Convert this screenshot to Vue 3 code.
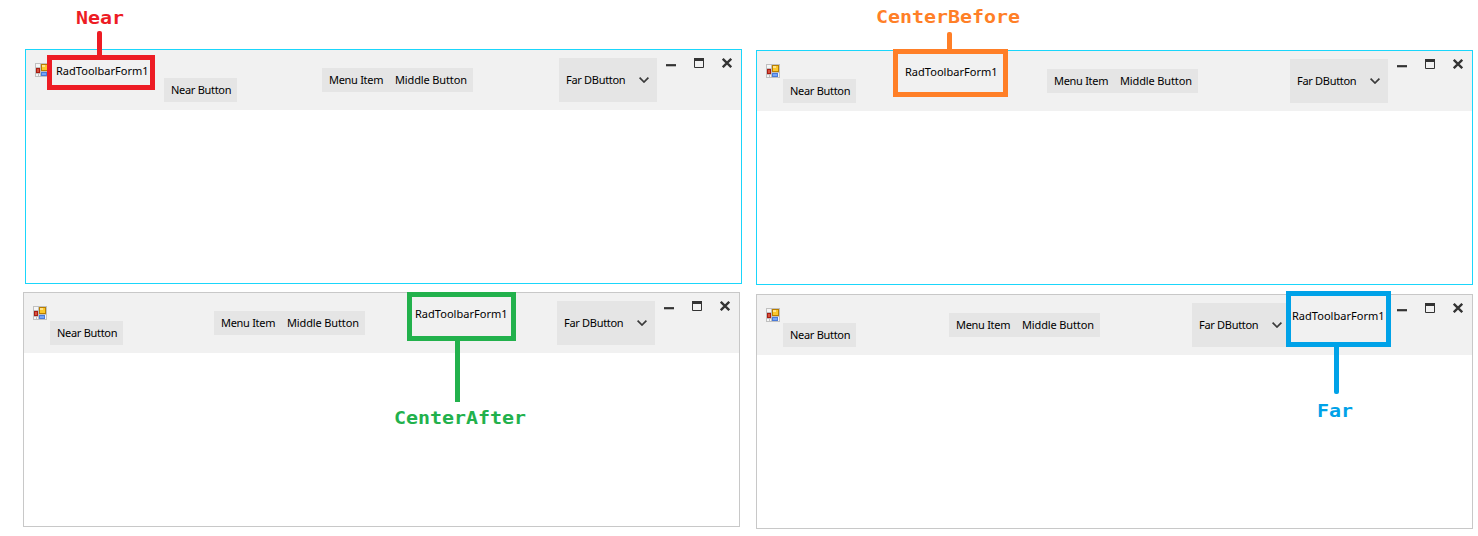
<script setup>
const forms = [
  { id: 'near', active: true, items: ['title', 'near', 'middle', 'far'] },
  { id: 'before', active: true, items: ['near', 'title', 'middle', 'far'] },
  { id: 'after', active: false, items: ['near', 'middle', 'title', 'far'] },
  { id: 'end', active: false, items: ['near', 'middle', 'far', 'title'] },
]
const notes = [
  { id: 'near', text: 'Near' },
  { id: 'before', text: 'CenterBefore' },
  { id: 'after', text: 'CenterAfter' },
  { id: 'end', text: 'Far' },
]
</script>

<template>
  <main class="page">
    <section v-for="f in forms" :key="f.id" class="form" :class="[f.id, { active: f.active }]">
      <header class="bar">
        <svg class="app-icon" width="14" height="14" viewBox="0 0 14 14" shape-rendering="crispEdges">
          <rect width="14" height="14" fill="#c0c0c0" />
          <rect x="1" y="1" width="4" height="3" fill="#f5f5f5" />
          <rect x="1" y="11" width="2" height="2" fill="#f5f5f5" />
          <rect x="4" y="11" width="1" height="2" fill="#f5f5f5" />
          <rect x="12" y="9" width="1" height="4" fill="#f5f5f5" />
          <rect x="1" y="5" width="4" height="5" fill="#a81c12" />
          <rect x="2" y="6" width="2" height="3" fill="#d8503c" />
          <rect x="6" y="1" width="7" height="7" fill="#b87e00" />
          <rect x="7" y="2" width="5" height="5" fill="#fbc82c" />
          <rect x="7" y="2" width="3" height="2" fill="#ffe38c" />
          <rect x="6" y="9" width="6" height="4" fill="#4a7ad8" />
          <rect x="7" y="10" width="4" height="2" fill="#74a5f8" />
        </svg>
        <template v-for="item in f.items" :key="item">
          <span v-if="item === 'title'" class="title">RadToolbarForm1</span>
          <div v-else-if="item === 'near'" class="btn near-btn"><span>Near Button</span></div>
          <div v-else-if="item === 'middle'" class="group">
            <div class="btn menu"><span>Menu Item</span></div>
            <div class="btn mid"><span>Middle Button</span></div>
          </div>
          <div v-else class="btn far-btn">
            <span>Far DButton</span>
            <svg width="10" height="6" viewBox="0 0 10 6"><path d="M.6.6 5 5 9.4.6" fill="none" stroke="#3a3a3a" stroke-width="1.7" /></svg>
          </div>
        </template>
        <div class="caption">
          <svg width="10" height="10" viewBox="0 0 10 10"><path d="M0 7.2H10" stroke="#333" stroke-width="2.2" /></svg>
          <svg width="10" height="10" viewBox="0 0 10 10"><path d="M.5 1V9.5H9.5V1" fill="none" stroke="#333" /><path d="M0 0H10V3H0Z" fill="#333" /></svg>
          <svg width="10" height="10" viewBox="0 0 10 10"><path d="M.8.8 9.2 9.2M9.2.8.8 9.2" stroke="#333" stroke-width="2.3" /></svg>
        </div>
      </header>
    </section>
    <div v-for="n in notes" :key="n.id" class="note" :class="'note-' + n.id">
      <i class="frame"></i><i class="stem"></i><b>{{ n.text }}</b>
    </div>
  </main>
</template>

<style>
body { margin: 0; background: #fff; }
</style>

<style scoped>
.page {
  position: relative;
  width: 1478px;
  height: 536px;
  overflow: hidden;
  display: grid;
  grid-template-columns: 756px 1fr;
  grid-template-rows: 292px 1fr;
  background: #fff;
  font: 11px/16px "Noto Sans", "Open Sans", sans-serif;
  color: #000;
  white-space: nowrap;
}
.form { box-sizing: border-box; width: 717px; height: 235px; border: 1px solid #c8c8c8; }
.form.active { border-color: #1ad6fb; }
.form.near { margin: 49px 0 0 25px; }
.form.before { margin-top: 50px; }
.form.after { margin-left: 23px; }
.form.end { margin-top: 2px; }
.bar { display: flex; align-items: flex-start; height: 60px; background: #f1f1f1; }
.app-icon { flex: none; margin: 13px 0 0 9px; }
.title { flex: none; width: 93px; margin-top: 13px; letter-spacing: .03px; }
.btn { box-sizing: border-box; flex: none; height: 24px; padding: 4px 0 0 7px; background: #e5e5e5; letter-spacing: -.3px; }
.near-btn { width: 73px; margin: 28px 0 0 3px; }
.group { flex: none; display: flex; margin-top: 18px; }
.menu { width: 66px; }
.mid { width: 85px; letter-spacing: -.13px; }
.far-btn { width: 98px; height: 44px; margin-top: 8px; padding: 0 8px 0 7px; display: flex; align-items: center; justify-content: space-between; }
.caption { flex: none; display: flex; gap: 18px; margin: 8px 9px 0 auto; }

.near .title { margin-left: 7px; }
.near .near-btn { margin-left: 15px; }
.near .group { margin-left: 85px; }
.near .far-btn { margin-left: 86px; }
.before .title { margin-left: 49px; }
.before .group { margin-left: 49px; }
.before .far-btn { margin-left: 92px; }
.after .group { margin-left: 91px; }
.after .title { margin-left: 50px; }
.after .far-btn { margin-left: 49px; }
.end .group { margin-left: 93px; }
.end .far-btn { margin-left: 92px; }
.end .title { margin-left: 2px; }

/* callouts drawn over the windows */
.note { position: absolute; color: var(--c); }
.frame { position: absolute; inset: 0; border: 5px solid var(--c); }
.stem { position: absolute; width: 5px; background: var(--c); }
.note b { position: absolute; font: bold 17.5px/20px "DejaVu Sans Mono", monospace; transform: scaleX(1.14); transform-origin: 0 0; }
.note-near { --c: #ed1c24; left: 47px; top: 55px; width: 108px; height: 35px; }
.note-near .stem { left: 50px; top: -24px; height: 24px; border-radius: 2px 2px 0 0; }
.note-near b { left: 29px; top: -47px; }
.note-before { --c: #ff7f27; left: 893px; top: 49px; width: 115px; height: 48px; }
.note-before .stem { left: 54px; top: -17px; height: 17px; border-radius: 2px 2px 0 0; }
.note-before b { left: -17px; top: -42px; }
.note-after { --c: #22b14c; left: 407px; top: 292px; width: 109px; height: 49px; }
.note-after .stem { left: 48px; top: 49px; height: 61px; }
.note-after b { left: -13px; top: 116px; }
.note-end { --c: #00a2e8; left: 1286px; top: 291px; width: 105px; height: 56px; }
.note-end .stem { left: 48px; top: 56px; height: 47px; border-radius: 0 0 2px 2px; }
.note-end b { left: 31px; top: 110px; }
</style>
